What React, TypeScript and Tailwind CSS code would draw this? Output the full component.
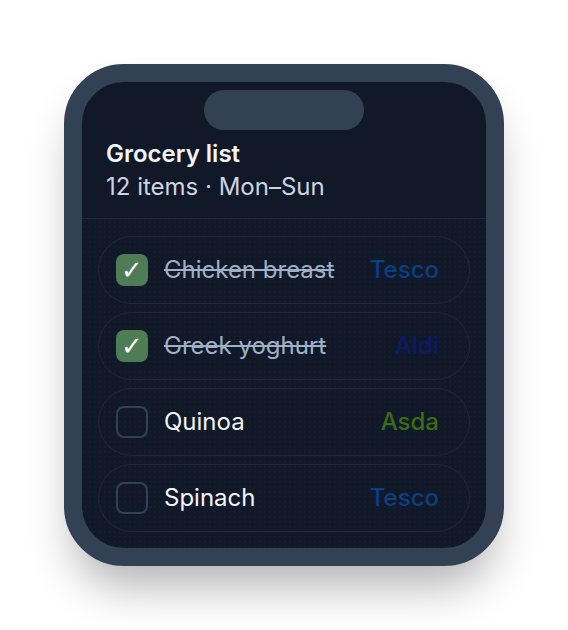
import React from "react";

type Item = { name: string; store: string; storeColor: string; done: boolean };

const items: Item[] = [
  { name: "Chicken breast", store: "Tesco", storeColor: "text-[#0a3f80]", done: true },
  { name: "Greek yoghurt", store: "Aldi", storeColor: "text-[#0c1a66]", done: true },
  { name: "Quinoa", store: "Asda", storeColor: "text-[#3d6a16]", done: false },
  { name: "Spinach", store: "Tesco", storeColor: "text-[#0a3f80]", done: false },
];

export default function App() {
  return (
    <div className="min-h-screen bg-white flex items-center justify-center font-['Inter',sans-serif]">
      <div className="w-[440px] rounded-[60px] border-[18px] border-[#334155] bg-[#111827] shadow-[0_30px_45px_-10px_rgba(0,0,0,0.3)] overflow-hidden">
        {/* notch */}
        <div className="flex justify-center pt-2">
          <div className="w-40 h-10 rounded-full bg-[#334155]" />
        </div>

        {/* header */}
        <div className="px-6 pt-[9px] pb-4 border-b border-[#1e293b]">
          <h1 className="text-2xl leading-[30px] font-semibold text-[#f1f5f9]">Grocery list</h1>
          <p className="mt-[3px] text-2xl leading-[30px] text-[#cbd5e1]">12 items · Mon–Sun</p>
        </div>

        {/* list */}
        <div className="px-4 pt-[17px] pb-4 flex flex-col gap-2 bg-[radial-gradient(#151d2e_1px,transparent_1px)] bg-[size:5px_5px]">
          {items.map((item) => (
            <div
              key={item.name}
              className="h-[68px] rounded-full border border-[#1e293b] flex items-center pl-[17px] pr-[30px]"
            >
              {item.done ? (
                <div className="w-8 h-8 rounded-lg bg-[#4e7d55] flex items-center justify-center text-white text-[26px] leading-none font-bold font-['DejaVu_Sans',sans-serif]">
                  ✓
                </div>
              ) : (
                <div className="w-8 h-8 rounded-lg border-2 border-[#334155]" />
              )}
              <span
                className={`ml-4 text-2xl ${
                  item.done ? "text-[#9fb0c6] line-through" : "text-[#f1f5f9]"
                }`}
              >
                {item.name}
              </span>
              <span className={`ml-auto text-2xl font-medium ${item.storeColor}`}>{item.store}</span>
            </div>
          ))}
        </div>
      </div>
    </div>
  );
}
